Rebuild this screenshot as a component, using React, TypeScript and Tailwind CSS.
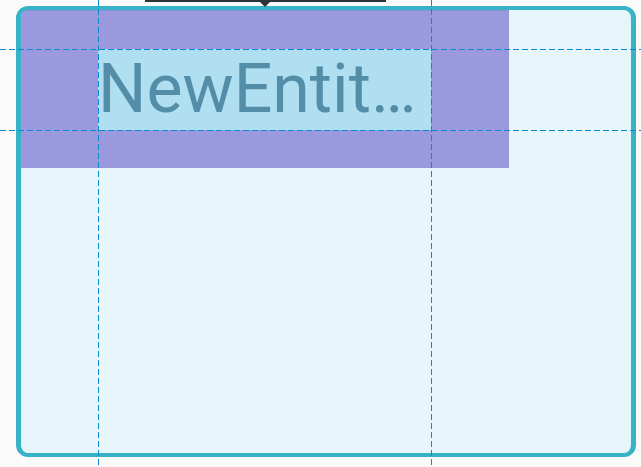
import React from "react";

export default function App() {
  return (
    <div className="relative w-[641px] h-[467px] overflow-hidden bg-[#fafafa]" style={{ fontFamily: "Roboto, 'Liberation Sans', sans-serif" }}>
      <div className="flex items-start pt-[6px] pl-4">
        <div className="flex flex-col items-start w-[620px] h-[451px] rounded-[12px] border-x-[5px] border-y-4 border-[#38b2c6] bg-[#e5f5fa] overflow-hidden">
          <div className="flex items-start w-[488px] h-[158px] bg-[#9a99dd] border-t border-[#8590d6] pt-[38px] pl-[77px]">
            <div className="flex items-center w-[333px] h-[81px] bg-[#afdff0] overflow-hidden">
              <span className="whitespace-nowrap text-[68px] leading-[79px] text-[#548da8]">
                NewEntit…
              </span>
            </div>
          </div>
        </div>
      </div>

      {/* tooltip marker at top */}
      <div className="absolute left-[145px] top-0 w-[241px] h-[2px] bg-[#2e3337]" />
      <div className="absolute left-[258px] top-0 w-0 h-0 border-l-[7px] border-r-[7px] border-t-[7px] border-l-transparent border-r-transparent border-t-[#2e3337]" />

      {/* guide lines */}
      <div className="absolute left-0 top-[49px] w-full h-px bg-[repeating-linear-gradient(90deg,#0b8ad3_0_6px,transparent_6px_9px)]" />
      <div className="absolute left-0 top-[130px] w-full h-px bg-[repeating-linear-gradient(90deg,#0b8ad3_0_6px,transparent_6px_9px)]" />
      <div className="absolute top-0 left-[98px] h-full w-px bg-[repeating-linear-gradient(180deg,#0b8ad3_0_6px,transparent_6px_9px)]" />
      <div className="absolute top-0 left-[431px] h-full w-px bg-[repeating-linear-gradient(180deg,#0b8ad3_0_6px,transparent_6px_9px)]" />
    </div>
  );
}
